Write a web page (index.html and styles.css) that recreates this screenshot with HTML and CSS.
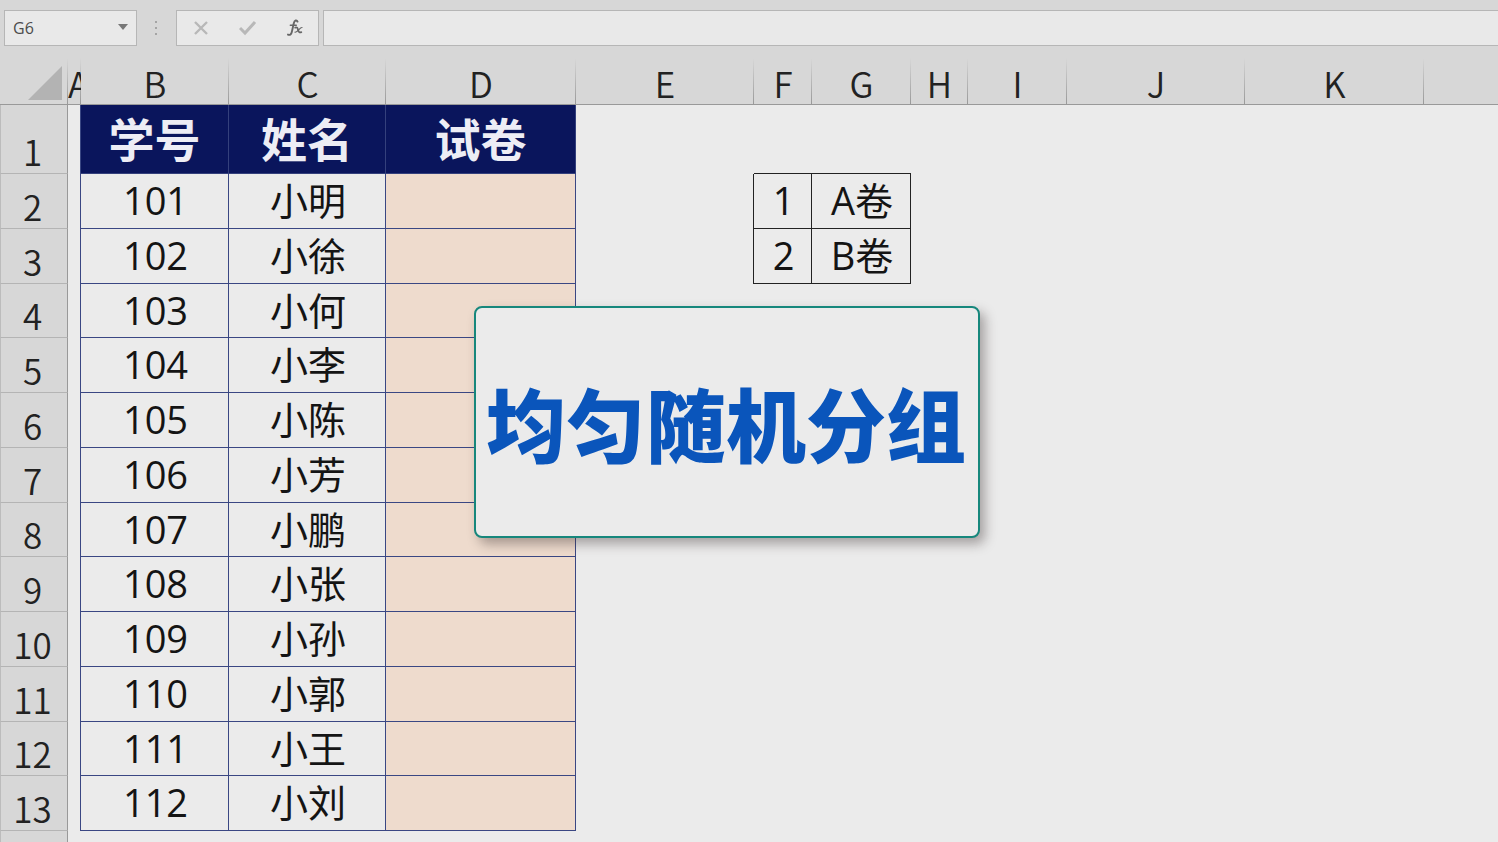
FILE: index.html
```html
<!DOCTYPE html>
<html lang="zh-CN">
<head>
<meta charset="utf-8">
<title>均匀随机分组</title>
<link rel="stylesheet" href="styles.css">
</head>
<body>
<header class="formula-bar">
  <div class="name-box">
    <input class="name-input" type="text" value="G6" aria-label="名称框">
    <button class="name-toggle" type="button" aria-label="展开名称框"><svg width="10" height="6" viewBox="0 0 10 6"><path d="M0 0h10L5 6z" fill="#777"/></svg></button>
  </div>
  <svg class="grip" width="4" height="16" viewBox="0 0 4 16"><path d="M1 1h2v2H1zM1 7h2v2H1zM1 13h2v2H1z" fill="#a4a4a4"/></svg>
  <div class="actions">
    <button class="action" type="button" aria-label="取消"><svg width="16" height="16" viewBox="0 0 16 16"><path d="M2 2l12 12M14 2L2 14" fill="none" stroke="#b8b8b8" stroke-width="2.4"/></svg></button>
    <button class="action" type="button" aria-label="输入"><svg width="18" height="16" viewBox="0 0 18 16"><path d="M1 8l5 5L16 2" fill="none" stroke="#b8b8b8" stroke-width="3"/></svg></button>
    <button class="action fx" type="button" aria-label="插入函数"><svg width="18" height="18" viewBox="0 0 18 18" fill="none" stroke="#666" stroke-linecap="round"><path d="M11.500 2.600C10.800 .8 8.500 1 7.800 4.200L5.800 13c-.6 2.600-2.200 3.400-3.800 2.600" stroke-width="1.900"/><path d="M4.300 6.200h6" stroke-width="1.400"/><path d="M9.200 8.600c1.800-.8 2.300.4 2.900 2.300.6 1.900 1.300 3.200 3.200 2.200" stroke-width="1.800"/><path d="M16 8.500c-2.200-.3-4.300 5.300-7 4.700" stroke-width="1.200"/></svg></button>
  </div>
  <input class="formula" type="text" aria-label="编辑栏">
</header>
<main class="sheet">
  <table class="grid">
    <colgroup>
      <col class="w-row"><col class="w-a"><col class="w-b"><col class="w-c"><col class="w-d"><col class="w-e"><col class="w-f"><col class="w-g"><col class="w-h"><col class="w-g"><col class="w-e"><col class="w-k"><col>
    </colgroup>
    <thead>
      <tr>
        <td class="corner"><button class="select-all" type="button" aria-label="全选"><svg width="34" height="34" viewBox="0 0 34 34"><path d="M34 0v34H0z" fill="#b3b3b3"/></svg></button></td>
        <th class="narrow">A</th><th>B</th><th>C</th><th>D</th><th>E</th><th>F</th><th>G</th><th>H</th><th>I</th><th>J</th><th>K</th><th class="last"></th>
      </tr>
    </thead>
    <tbody>
      <tr class="title-row"><th>1</th><td class="edge"></td><td class="title">学号</td><td class="title">姓名</td><td class="title">试卷</td><td></td><td class="line-b"></td><td class="line-b"></td><td colspan="5"></td></tr>
      <tr><th>2</th><td class="edge"></td><td class="cell">101</td><td class="cell">小明</td><td class="cell fill"></td><td class="line-r"></td><td class="key">1</td><td class="key">A卷</td><td colspan="5"></td></tr>
      <tr><th>3</th><td class="edge"></td><td class="cell">102</td><td class="cell">小徐</td><td class="cell fill"></td><td class="line-r"></td><td class="key">2</td><td class="key">B卷</td><td colspan="5"></td></tr>
      <tr><th>4</th><td class="edge"></td><td class="cell">103</td><td class="cell">小何</td><td class="cell fill"></td><td colspan="8"></td></tr>
      <tr><th>5</th><td class="edge"></td><td class="cell">104</td><td class="cell">小李</td><td class="cell fill"></td><td colspan="8"></td></tr>
      <tr><th>6</th><td class="edge"></td><td class="cell">105</td><td class="cell">小陈</td><td class="cell fill"></td><td colspan="8"></td></tr>
      <tr><th>7</th><td class="edge"></td><td class="cell">106</td><td class="cell">小芳</td><td class="cell fill"></td><td colspan="8"></td></tr>
      <tr><th>8</th><td class="edge"></td><td class="cell">107</td><td class="cell">小鹏</td><td class="cell fill"></td><td colspan="8"></td></tr>
      <tr><th>9</th><td class="edge"></td><td class="cell">108</td><td class="cell">小张</td><td class="cell fill"></td><td colspan="8"></td></tr>
      <tr><th>10</th><td class="edge"></td><td class="cell">109</td><td class="cell">小孙</td><td class="cell fill"></td><td colspan="8"></td></tr>
      <tr><th>11</th><td class="edge"></td><td class="cell">110</td><td class="cell">小郭</td><td class="cell fill"></td><td colspan="8"></td></tr>
      <tr><th>12</th><td class="edge"></td><td class="cell">111</td><td class="cell">小王</td><td class="cell fill"></td><td colspan="8"></td></tr>
      <tr><th>13</th><td class="edge"></td><td class="cell">112</td><td class="cell">小刘</td><td class="cell fill"></td><td colspan="8"></td></tr>
    </tbody>
  </table>
  <div class="row-gutter"></div>
  <h1 class="callout">均匀随机分组</h1>
</main>
</body>
</html>
```
FILE: styles.css
```css
:root {
  --chrome: #d7d7d7;
  --paper: #ebebeb;
  --navy: #0a155c;
  --cell-line: #3a4783;
  --ink: #141414;
}

* {
  box-sizing: border-box;
}

body {
  margin: 0;
  min-height: 100vh;
  display: flex;
  flex-direction: column;
  background: var(--paper);
  color: var(--ink);
  font-family: "Open Sans", "Noto Sans CJK SC", sans-serif;
}

button,
input {
  border: 0;
  padding: 0;
  background: none;
  font: inherit;
  color: inherit;
  outline: 0;
}

button {
  display: flex;
  align-items: center;
  justify-content: center;
}

.formula-bar {
  flex: none;
  display: flex;
  align-items: center;
  height: 58px;
  padding: 10px 0 12px 4px;
  background: var(--chrome);
}

.name-box,
.actions,
.formula {
  height: 36px;
  border: 1px solid #b6b6b6;
  background: #e9e9e9;
}

.name-box {
  display: flex;
  width: 133px;
}

.name-input {
  flex: 1;
  min-width: 0;
  padding-left: 8px;
  font-size: 16px;
  color: #4c4c4c;
}

.name-toggle {
  width: 26px;
  padding-bottom: 2px;
}

.grip {
  margin: 0 18px 0 17px;
}

.actions {
  display: flex;
  justify-content: space-around;
  width: 143px;
}

.action {
  width: 46px;
}

.formula {
  flex: 1;
  min-width: 0;
  margin-left: 4px;
  padding: 0 8px;
  border-right: 0;
}

.sheet {
  flex: 1;
  display: flex;
  flex-direction: column;
  position: relative;
}

.grid {
  width: 100%;
  table-layout: fixed;
  border-collapse: separate;
  border-spacing: 0;
}

.w-row { width: 68px; }
.w-a { width: 13px; }
.w-b { width: 148px; }
.w-c { width: 157px; }
.w-d { width: 190px; }
.w-e { width: 178px; }
.w-f { width: 58px; }
.w-g { width: 99px; }
.w-h { width: 57px; }
.w-k { width: 179px; }

th,
td {
  height: 55px;
  padding: 0;
  white-space: nowrap;
  text-align: center;
  font-size: 38px;
  font-weight: 400;
  line-height: 40px;
}

th {
  font-family: "Noto Sans CJK SC DemiLight", "Noto Sans CJK SC", sans-serif;
  font-size: 35px;
  font-weight: 350;
  color: #222;
  background: var(--chrome);
}

thead th,
.corner {
  height: 47px;
  border-bottom: 1px solid #999;
  background: linear-gradient(transparent, #999) right / 1px 100% no-repeat var(--chrome);
}

thead th {
  padding-top: 4px;
}

thead .last {
  background: var(--chrome);
}

thead .narrow {
  overflow: hidden;
  text-align: left;
}

.select-all {
  margin: 3px 0 0 28px;
}

tbody th {
  padding: 0 3px 2px 0;
  vertical-align: bottom;
  border-left: 1px solid #bcbcbc;
  border-right: 1px solid #999;
  border-bottom: 1px solid #b4b4b4;
}

tbody tr:nth-child(4n) > * {
  height: 54px;
}

.title-row > * {
  height: 69px;
}

.title {
  font-size: 46px;
  font-weight: 700;
  color: #ededf5;
  background: var(--navy);
  border-right: 1px solid #34407c;
  border-bottom: 1px solid #34407c;
}

.edge {
  border-right: 1px solid var(--cell-line);
}

.cell {
  padding: 0 0 2px 2px;
  border-right: 1px solid var(--cell-line);
  border-bottom: 1px solid var(--cell-line);
}

.fill {
  background: #eedbcd;
}

.key {
  padding: 0 0 2px 2px;
  border-right: 1px solid #222;
  border-bottom: 1px solid #222;
}

.line-b {
  border-bottom: 1px solid #222;
}

.line-r {
  border-right: 1px solid #222;
}

.row-gutter {
  flex: 1;
  width: 68px;
  border-left: 1px solid #bcbcbc;
  border-right: 1px solid #999;
  background: var(--chrome);
}

.callout {
  position: absolute;
  left: 474px;
  top: 248px;
  display: flex;
  align-items: center;
  justify-content: center;
  height: 232px;
  margin: 0;
  padding: 6px 12px 0 10px;
  border: 2px solid #16877c;
  border-radius: 8px;
  background: var(--paper);
  box-shadow: 5px 6px 12px rgba(60, 50, 50, 0.4);
  color: #0a55bb;
  font-size: 80px;
  font-weight: 900;
  line-height: 1;
  white-space: nowrap;
}
```
